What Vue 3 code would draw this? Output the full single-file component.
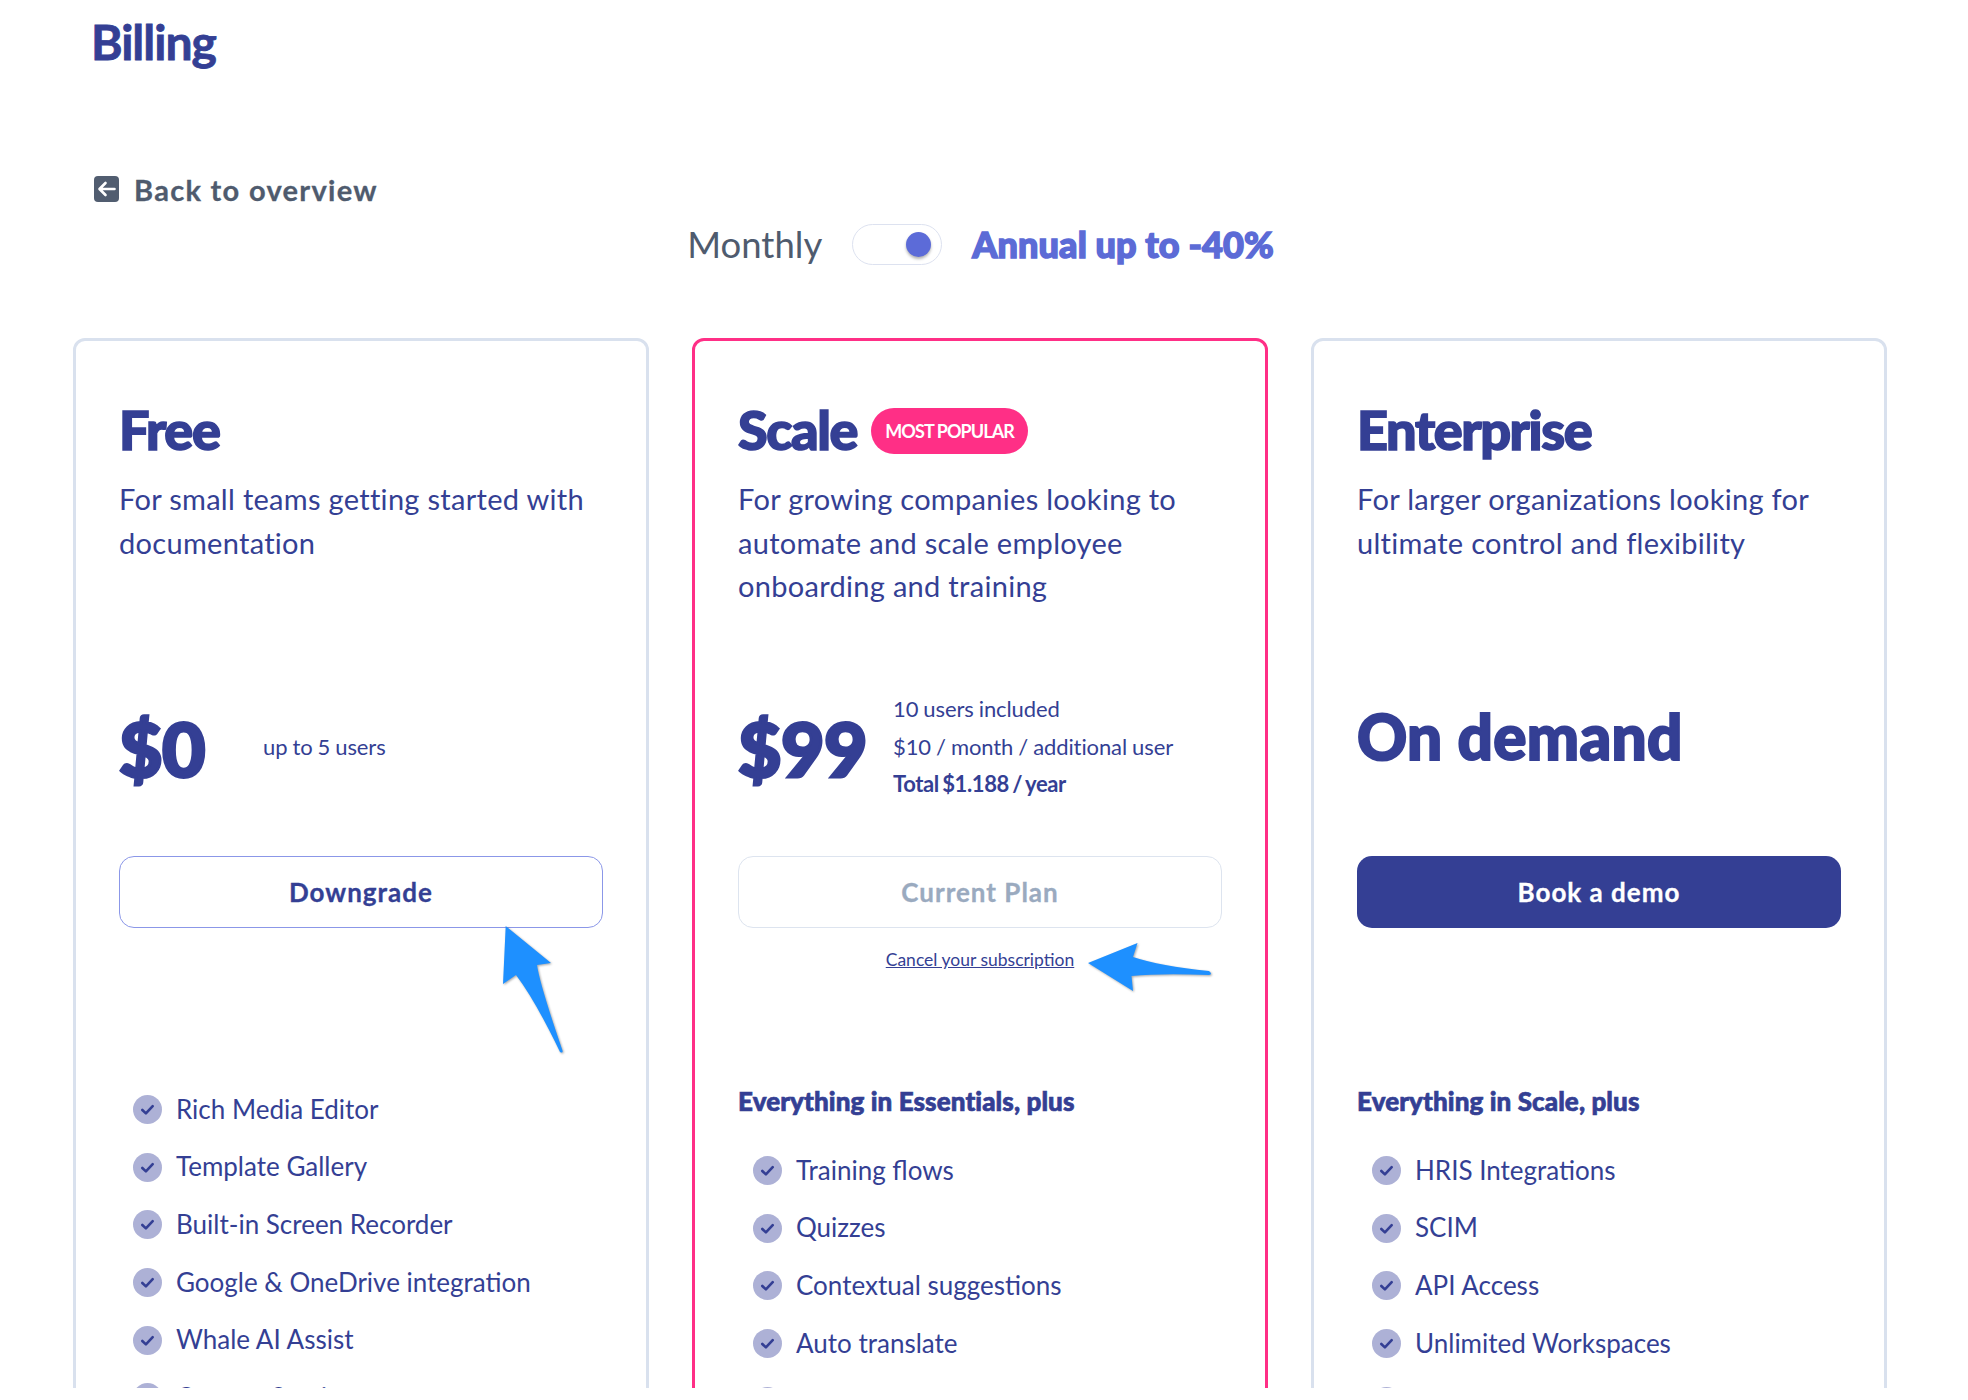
<template>
  <div class="page">
    <h1 class="page-title">Billing</h1>

    <a class="back-link">
      <svg class="back-icon" width="25" height="26" viewBox="0 0 25 26">
        <rect width="25" height="26" rx="4" fill="#515d70" />
        <path d="M20.5 13H6M11.5 7l-6 6 6 6" fill="none" stroke="#fff" stroke-width="2.6" stroke-linecap="round" stroke-linejoin="round" />
      </svg>
      <span>Back to overview</span>
    </a>

    <div class="period-switch">
      <span class="period-monthly">Monthly</span>
      <span class="toggle"><span class="knob"></span></span>
      <span class="period-annual">Annual up to -40%</span>
    </div>

    <div class="plans">
      <section v-for="plan in plans" :key="plan.name" class="plan" :class="{ popular: plan.badge }">
        <div class="plan-head">
          <h2>{{ plan.name }}</h2>
          <span v-if="plan.badge" class="badge">{{ plan.badge }}</span>
        </div>
        <p class="plan-desc">{{ plan.desc }}</p>

        <div class="price-row">
          <div v-if="plan.demand" class="on-demand">{{ plan.demand }}</div>
          <template v-else>
            <div class="price" :class="{ wide: plan.notes.length > 1 }">{{ plan.price }}</div>
            <div class="notes">
              <div v-for="note in plan.notes" :key="note" :class="{ strong: note.startsWith('Total') }">{{ note }}</div>
            </div>
          </template>
        </div>

        <div class="actions">
          <button class="plan-btn" :class="plan.btnType">{{ plan.btn }}</button>
          <a v-if="plan.cancel" class="cancel">{{ plan.cancel }}</a>
        </div>

        <h3 v-if="plan.listTitle" class="list-title">{{ plan.listTitle }}</h3>
        <ul class="features">
          <li v-for="(item, i) in plan.features" :key="i">
            <svg width="29" height="29" viewBox="0 0 29 29">
              <circle cx="14.5" cy="14.5" r="14.5" fill="#adb1d6" />
              <path d="M9.3 15l3.6 3.4 6.8-7.2" fill="none" stroke="#343f94" stroke-width="2.6" stroke-linecap="round" stroke-linejoin="round" />
            </svg>
            <span>{{ item }}</span>
          </li>
        </ul>
      </section>
    </div>

    <svg class="arrows" width="1968" height="1388" viewBox="0 0 1968 1388">
      <path d="M505.7 926L551 963L537 965Q540 985 562 1049Q564 1054 560 1052Q535 1000 516 975L503 984Z" />
      <path d="M1088 963L1137.5 943L1133 957Q1160 966 1209 971Q1213 974 1209 975Q1160 973 1131.5 976L1133 991Z" />
    </svg>
  </div>
</template>

<script setup>
const plans = [
  {
    name: 'Free',
    desc: 'For small teams getting started with documentation',
    price: '$0',
    notes: ['up to 5 users'],
    btn: 'Downgrade',
    btnType: 'outline',
    features: ['Rich Media Editor', 'Template Gallery', 'Built-in Screen Recorder', 'Google & OneDrive integration', 'Whale AI Assist', 'Custom Sections'],
  },
  {
    name: 'Scale',
    badge: 'MOST POPULAR',
    desc: 'For growing companies looking to automate and scale employee onboarding and training',
    price: '$99',
    notes: ['10 users included', '$10 / month / additional user', 'Total $1.188 / year'],
    btn: 'Current Plan',
    btnType: 'current',
    cancel: 'Cancel your subscription',
    listTitle: 'Everything in Essentials, plus',
    features: ['Training flows', 'Quizzes', 'Contextual suggestions', 'Auto translate', ''],
  },
  {
    name: 'Enterprise',
    desc: 'For larger organizations looking for ultimate control and flexibility',
    demand: 'On demand',
    btn: 'Book a demo',
    btnType: 'solid',
    listTitle: 'Everything in Scale, plus',
    features: ['HRIS Integrations', 'SCIM', 'API Access', 'Unlimited Workspaces', ''],
  },
]
</script>

<style>
html, body {
  margin: 0;
  background: #fff;
  overflow: hidden;
}
</style>

<style scoped>
.page {
  position: relative;
  width: 1968px;
  height: 1388px;
  overflow: hidden;
  box-sizing: border-box;
  padding: 0 82px 0 73px;
  background: #fff;
  color: #343f94;
  font-family: "Lato", "Noto Sans", sans-serif;
}

.page-title {
  margin: 0 0 0 18px;
  font-size: 48px;
  line-height: 84px;
  font-weight: 700;
  letter-spacing: -1px;
  -webkit-text-stroke: 0.8px currentColor;
}

.back-link {
  display: flex;
  align-items: center;
  gap: 15px;
  margin: 87px 0 0 21px;
  height: 36px;
  color: #4f5b6e;
  font-size: 29px;
  font-weight: 700;
  letter-spacing: 1.3px;
  -webkit-text-stroke: 0.3px currentColor;
}

.back-icon {
  flex: none;
}

.period-switch {
  display: flex;
  align-items: center;
  justify-content: center;
  gap: 30px;
  height: 42px;
  margin-top: 16px;
  padding-left: 2px;
}

.period-monthly {
  color: #4f5b6e;
  font-size: 36.5px;
}

.toggle {
  display: flex;
  align-items: center;
  justify-content: flex-end;
  box-sizing: border-box;
  width: 90px;
  height: 41px;
  padding-right: 10px;
  border: 1px solid #dde2f0;
  border-radius: 21px;
}

.knob {
  width: 25px;
  height: 25px;
  border-radius: 50%;
  background: #5c6bd8;
  box-shadow: 0 2px 3px rgba(0, 0, 0, 0.3);
}

.period-annual {
  color: #5c6bd6;
  font-size: 36px;
  font-weight: 900;
  letter-spacing: 0.1px;
  -webkit-text-stroke: 1.5px currentColor;
}

.plans {
  display: grid;
  grid-template-columns: repeat(3, 576px);
  column-gap: 43px;
  margin-top: 73px;
}

.plan {
  box-sizing: border-box;
  height: 1200px;
  padding: 61px 43px 0;
  border: 3px solid #d9e1ee;
  border-radius: 12px;
}

.plan.popular {
  border-color: #ff2f86;
}

.plan-head {
  display: flex;
  align-items: center;
  gap: 14px;
  height: 56px;
}

h2 {
  margin: 0;
  font-size: 54px;
  line-height: 56px;
  font-weight: 900;
  letter-spacing: -1.4px;
  -webkit-text-stroke: 1.6px currentColor;
}

.badge {
  margin-top: 2px;
  padding: 0 14px;
  height: 46px;
  line-height: 46px;
  border-radius: 23px;
  background: #ff2f86;
  color: #fff;
  font-size: 18px;
  font-weight: 700;
  letter-spacing: -0.9px;
}

.plan-desc {
  height: 132px;
  margin: 19px 0 0;
  font-size: 29px;
  line-height: 43.5px;
  letter-spacing: 0.3px;
}

.price-row {
  display: flex;
  align-items: center;
  height: 113px;
  margin-top: 82px;
}

.price {
  width: 144px;
  flex: none;
  font-size: 75px;
  font-weight: 900;
  letter-spacing: -0.5px;
  -webkit-text-stroke: 3px currentColor;
}

.price.wide {
  width: 155px;
}

.notes {
  margin-top: -2px;
  font-size: 22px;
  line-height: 37.6px;
  letter-spacing: -0.1px;
  word-spacing: -0.5px;
}

.strong {
  font-weight: 700;
  letter-spacing: -0.4px;
  word-spacing: -1.5px;
}

.on-demand {
  margin-top: -24px;
  font-size: 62px;
  font-weight: 900;
  letter-spacing: 0.3px;
  -webkit-text-stroke: 2px currentColor;
}

.actions {
  height: 225px;
  margin-top: 52px;
}

.plan-btn {
  display: block;
  box-sizing: border-box;
  width: 100%;
  height: 72px;
  padding-bottom: 2px;
  border-radius: 15px;
  border: 1px solid transparent;
  background: #fff;
  font-family: inherit;
  font-size: 26px;
  font-weight: 700;
  letter-spacing: 1px;
  -webkit-text-stroke: 0.3px currentColor;
}

.plan-btn.outline {
  border-color: #8b97e8;
  color: #343f94;
}

.plan-btn.current {
  border-color: #dde4ef;
  color: #9aaabf;
}

.plan-btn.solid {
  background: #343f94;
  color: #fff;
}

.cancel {
  display: block;
  margin-top: 20px;
  text-align: center;
  font-size: 17.5px;
  line-height: 24px;
  text-decoration: underline;
}

.list-title {
  margin: 0;
  font-size: 26px;
  line-height: 40px;
  font-weight: 900;
  letter-spacing: 0.1px;
  -webkit-text-stroke: 0.7px currentColor;
}

.list-title + .features {
  margin-top: 21px;
  padding-left: 15px;
}

.features {
  margin: 0;
  padding: 0 0 0 14px;
  list-style: none;
}

.features li {
  display: flex;
  align-items: center;
  gap: 14px;
  height: 57.6px;
  font-size: 26px;
}

.features svg {
  flex: none;
}

.features span {
  margin-top: -2px;
}

.arrows {
  position: absolute;
  left: 0;
  top: 0;
  pointer-events: none;
  fill: #1e90ff;
  filter: drop-shadow(1px 1px 1px rgba(0, 0, 0, 0.35));
}
</style>
